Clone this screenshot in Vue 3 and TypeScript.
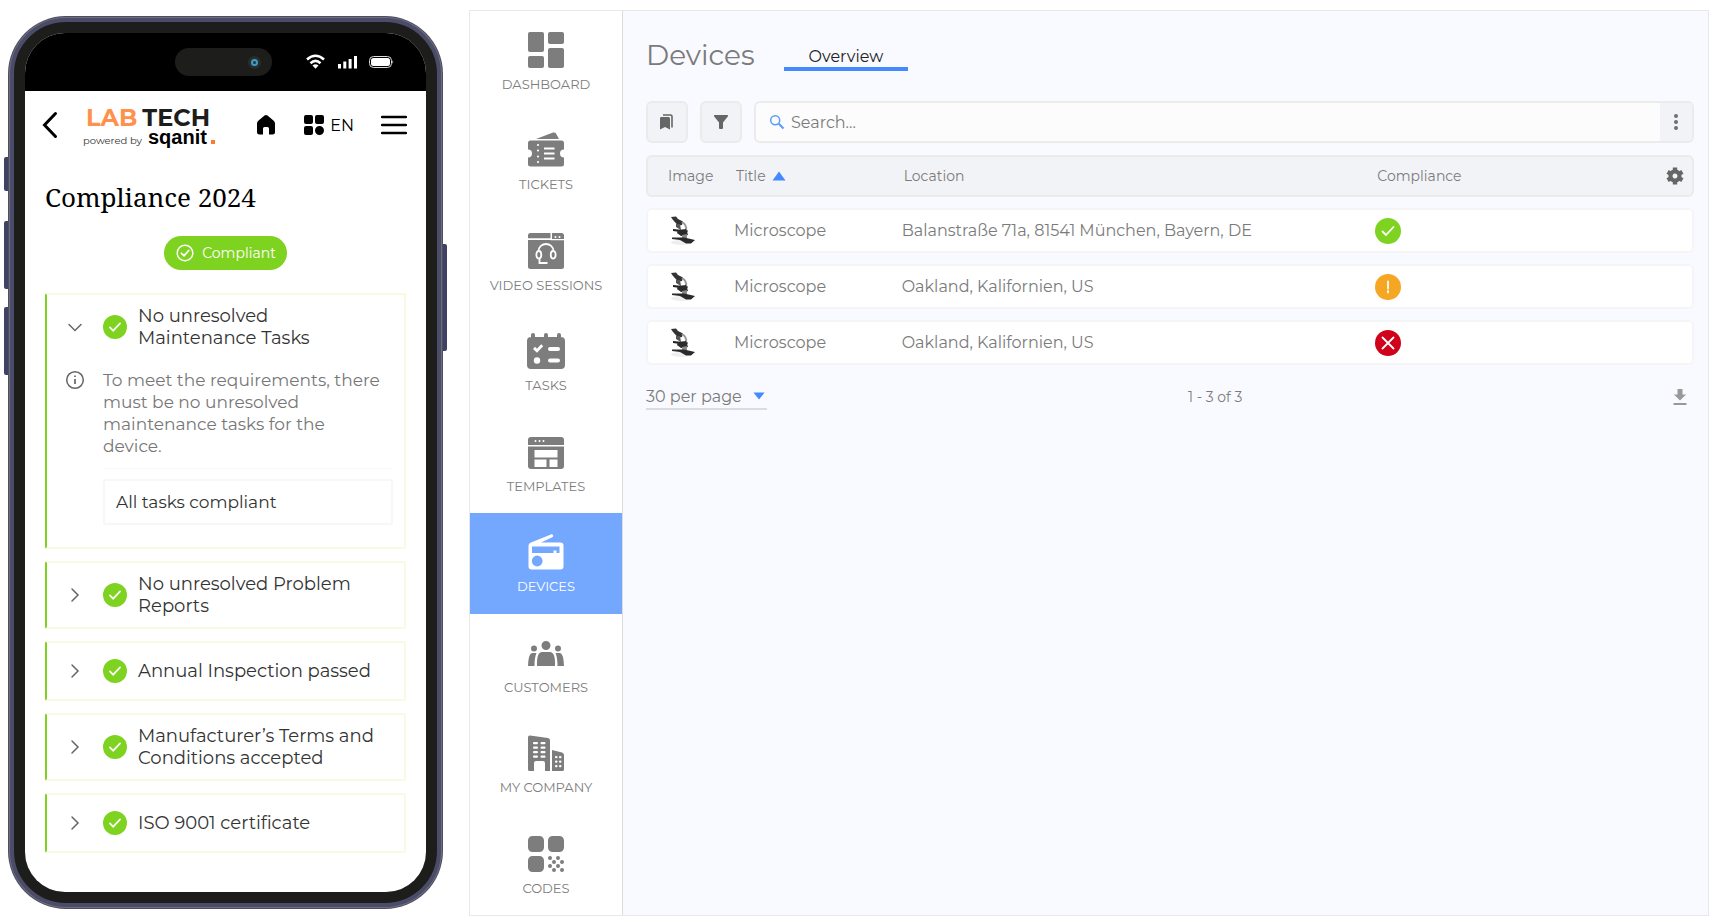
<script setup lang="ts">
import { ref } from 'vue'

interface NavItem {
  label: string
  fill: string
  cutFill?: string
  cutLine?: string
}

interface Check {
  title: string
  info?: string
  result?: string
}

interface Device {
  title: string
  location: string
  state: 'ok' | 'warn' | 'fail'
}

const rr = (x: number, y: number, w: number, h: number, r: number): string =>
  `M${x + r} ${y}h${w - 2 * r}a${r} ${r} 0 0 1 ${r} ${r}v${h - 2 * r}a${r} ${r} 0 0 1 ${-r} ${r}h${-(w - 2 * r)}a${r} ${r} 0 0 1 ${-r} ${-r}v${-(h - 2 * r)}a${r} ${r} 0 0 1 ${r} ${-r}z`

const dots = (list: number[][], r: number): string =>
  list.map(([x, y]) => rr(x - r, y - r, 2 * r, 2 * r, r)).join('')

const nav: NavItem[] = [
  {
    label: 'DASHBOARD',
    fill: rr(0, 0, 16, 20, 2) + rr(20, 0, 16, 12, 2) + rr(0, 24, 16, 12, 2) + rr(20, 16, 16, 20, 2),
  },
  {
    label: 'TICKETS',
    fill: 'M8 7L25 .6Q27 0 28 1.600L31 7zM2.500 8.500H33.500Q36 8.500 36 11V17.500A4 4 0 0 0 36 25.500V32Q36 34.500 33.500 34.500H2.500Q0 34.500 0 32V25.500A4 4 0 0 0 0 17.500V11Q0 8.500 2.500 8.500z',
    cutFill: dots([[10, 13], [10, 18.5], [10, 24.5], [10, 30]], 1.1),
    cutLine: 'M16 16.500H26.500M16 21.500H26.500M16 26.500H26.500',
  },
  {
    label: 'VIDEO SESSIONS',
    fill: rr(0, 0, 36, 36, 2.5),
    cutFill: dots([[27.5, 4], [31.5, 4]], 1) + 'M22.500 0h1.500v6h12v1.200H22.500zM0 5.200H22.500V7H0z',
    cutLine: 'M10.500 18.500C10.500 8.500 25.500 8.500 25.500 18.500M11 18C7.500 17.500 7.500 26 11 25.500C14 25.500 14 18 11 18M25 18C28.500 17.500 28.500 26 25 25.500C22 25.500 22 18 25 18M11.500 26V30H19.500',
  },
  {
    label: 'TASKS',
    fill: rr(-1, 4, 38, 32, 4) + rr(3, 0, 4, 8, 2) + rr(16, 0, 4, 8, 2) + rr(29, 0, 4, 8, 2),
    cutFill: rr(20, 14, 12, 4, 2) + rr(20, 25.5, 12, 4, 2) + dots([[9, 27.5]], 3.2) + 'M5 16L7 13.800L9 15.800L13.200 11.200L15.200 13.200L9 19.800z',
  },
  {
    label: 'TEMPLATES',
    fill: rr(0, 3, 36, 32, 3),
    cutFill: 'M0 11h36v1.500H0zM6.500 16h23v7.500h-23zM6.500 25.500h12v7.500h-12zM21.500 25.500h8v7.500h-8z' + dots([[7.5, 7], [11.5, 7], [15.5, 7]], 1),
  },
  {
    label: 'DEVICES',
    fill: 'M3 8.500L23.500 .3Q25 0 25.200 2Q25.200 2.800 24.200 3.200L13 8.500H32.500Q35.500 8.500 35.500 11.500V32.500Q35.500 35.500 32.500 35.500H3.500Q.5 35.500 .5 32.500V11.500Q.5 9.500 3 8.500z',
    cutFill: 'M4 12.500H31.500V19H28.500V16.500H25.500V19H4z' + dots([[9.2, 27]], 5.4),
  },
  {
    label: 'CUSTOMERS',
    fill: dots([[18, 10.5]], 4.5) + dots([[6, 13.5], [30, 13.5]], 3)
      + 'M9 31Q8.500 17 14 17H22Q27.500 17 27 31zM0 31Q.5 18.500 4 18H8.500Q6.500 22 6.500 31zM36 31Q35.500 18.500 32 18H27.500Q29.500 22 29.500 31z',
  },
  {
    label: 'MY COMPANY',
    fill: 'M2 .5L20 3Q22 3.300 22 5.500V36H17V28Q17 26 15 26H8Q6 26 6 28V36H1.500Q0 36 0 34.500V2.500Q0 .3 2 .5zM24 15L34 17.500Q36 18 36 20V34.500Q36 36 34.500 36H24z',
    cutFill: [7, 11.5, 16, 20.5].map((y) => rr(5, y, 5, 2.2, 1) + rr(12.5, y, 5, 2.2, 1)).join('')
      + [21, 25.5, 30].map((y) => rr(27, y, 2.5, 2.2, 1) + rr(31, y, 2.5, 2.2, 1)).join(''),
  },
  {
    label: 'CODES',
    fill: rr(0, 0, 16, 16, 4.5) + rr(20, 0, 16, 16, 4.5) + rr(0, 20, 16, 16, 4.5)
      + dots([[22, 22], [30, 22], [26, 26], [34, 26], [22, 30], [30, 30], [26, 34], [34, 34]], 2),
  },
]

const current = ref('DEVICES')

const checks: Check[] = [
  {
    title: 'No unresolved Maintenance Tasks',
    info: 'To meet the requirements, there must be no unresolved maintenance tasks for the device.',
    result: 'All tasks compliant',
  },
  { title: 'No unresolved Problem Reports' },
  { title: 'Annual Inspection passed' },
  { title: 'Manufacturer’s Terms and Conditions accepted' },
  { title: 'ISO 9001 certificate' },
]

const open = ref(0)

const devices: Device[] = [
  { title: 'Microscope', location: 'Balanstraße 71a, 81541 München, Bayern, DE', state: 'ok' },
  { title: 'Microscope', location: 'Oakland, Kalifornien, US', state: 'warn' },
  { title: 'Microscope', location: 'Oakland, Kalifornien, US', state: 'fail' },
]

const marks = {
  ok: { color: '#7ed321', path: 'M7.500 13.500L11 17L18.500 9', name: 'Compliant' },
  warn: { color: '#f5a623', path: 'M13 7.500V14.500M13 17V18.500', name: 'Attention' },
  fail: { color: '#d0021b', path: 'M7.500 7.500L18.500 18.500M18.500 7.500L7.500 18.500', name: 'Not compliant' },
}
</script>

<template>
  <div class="page">
    <section class="phone" aria-label="Mobile app">
      <i class="key key-mute"></i>
      <i class="key key-up"></i>
      <i class="key key-down"></i>
      <i class="key key-power"></i>
      <div class="bezel">
        <div class="screen">
          <div class="status">
            <div class="island"><i class="camera"></i></div>
            <svg class="status-icons" viewBox="0 0 88 16" aria-hidden="true">
              <g fill="none" stroke="#fff" stroke-width="2.600">
                <path d="M1 5.500Q9.500 -2 18 5.500" />
                <path d="M4.500 9.200Q9.500 4.500 14.500 9.200" />
              </g>
              <path d="M6.500 11.500Q9.500 9 12.500 11.500L9.500 14.700z" fill="#fff" />
              <path d="M32 10h3v4.500h-3zM37.300 7.500h3v7h-3zM42.600 5h3v9.500h-3zM48 2h3v12.500h-3z" fill="#fff" />
              <rect x="63.500" y="2.500" width="22" height="11" rx="4" fill="none" stroke="#ddd" />
              <rect x="65" y="4" width="19" height="8" rx="2.500" fill="#fff" />
              <path d="M86.500 6q1.500 2 0 4z" fill="#fff" />
            </svg>
          </div>

          <header class="app-bar">
            <button class="plain" aria-label="Back">
              <svg width="18" height="28" viewBox="0 0 18 28"><path d="M14.500 2.500L3.500 14L14.500 25.500" fill="none" stroke="#000" stroke-width="3" stroke-linecap="round" /></svg>
            </button>
            <div class="logo">
              <div class="logo-top"><span class="lab">LAB</span><span>TECH</span></div>
              <div class="logo-sub"><span class="by">powered by</span><b>sqanit</b><i></i></div>
            </div>
            <button class="plain home" aria-label="Home">
              <svg width="20" height="22" viewBox="0 0 20 22"><path d="M10 1Q10.800 1 11.500 1.600L18 7Q19 8 19 9.500V18Q19 20.500 16.500 20.500H13V14.500Q13 13 11.500 13H8.500Q7 13 7 14.500V20.500H3.500Q1 20.500 1 18V9.500Q1 8 2 7L8.500 1.600Q9.200 1 10 1z" /></svg>
            </button>
            <button class="plain lang">
              <svg width="20" height="20" viewBox="0 0 20 20" aria-hidden="true"><path :d="rr(0, 0, 9, 9, 2) + rr(11, 0, 9, 9, 2) + rr(0, 11, 9, 9, 2) + rr(11, 11, 9, 9, 4.5)" /></svg>
              <span>EN</span>
            </button>
            <button class="plain" aria-label="Menu">
              <svg width="26" height="20" viewBox="0 0 26 20"><path d="M1 2H25M1 10H25M1 18H25" stroke="#000" stroke-width="2.500" stroke-linecap="round" /></svg>
            </button>
          </header>

          <div class="app-body">
            <h1>Compliance 2024</h1>
            <div class="pill">
              <svg width="18" height="18" viewBox="0 0 18 18" fill="none" stroke="#fff" stroke-width="1.400" aria-hidden="true"><circle cx="9" cy="9" r="7.800" /><path d="M5.500 9.300L8 11.800L12.700 6.500" stroke-linecap="round" stroke-width="1.800" /></svg>
              Compliant
            </div>
            <article v-for="(c, i) in checks" :key="c.title" class="check">
              <button class="check-head" :aria-expanded="open === i" @click="open = open === i ? -1 : i">
                <svg width="20" height="20" viewBox="0 0 20 20" fill="none" stroke="#666" stroke-width="1.500" stroke-linecap="round" aria-hidden="true">
                  <path :d="open === i ? 'M4 7.500L10 13.500L16 7.500' : 'M7 4L13 10L7 16'" />
                </svg>
                <svg class="tick" width="24" height="24" viewBox="0 0 26 26" fill="none" aria-hidden="true">
                  <circle cx="13" cy="13" r="13" fill="#7ed321" />
                  <path :d="marks.ok.path" stroke="#fff" stroke-width="1.800" stroke-linecap="round" />
                </svg>
                <span>{{ c.title }}</span>
              </button>
              <div v-if="open === i && c.info" class="detail">
                <svg width="20" height="20" viewBox="0 0 20 20" fill="none" stroke="#666" aria-hidden="true"><circle cx="10" cy="10" r="8.300" stroke-width="1.500" /><path d="M10 9V14M10 5.500V7" stroke-width="1.700" /></svg>
                <div class="detail-main">
                  <p>{{ c.info }}</p>
                  <div class="result">{{ c.result }}</div>
                </div>
              </div>
            </article>
          </div>
        </div>
      </div>
    </section>

    <section class="panel" aria-label="Desktop app">
      <nav class="side">
        <a v-for="n in nav" :key="n.label" href="#" :class="{ active: n.label === current }" @click.prevent="current = n.label">
          <svg width="36" height="36" viewBox="0 0 36 36" aria-hidden="true">
            <path :d="n.fill" fill="currentColor" />
            <path v-if="n.cutFill" class="cut-fill" :d="n.cutFill" />
            <path v-if="n.cutLine" class="cut-line" :d="n.cutLine" />
          </svg>
          <span>{{ n.label }}</span>
        </a>
      </nav>

      <main class="main">
        <div class="heading">
          <h2>Devices</h2>
          <a href="#" class="tab" aria-current="page">Overview</a>
        </div>

        <div class="tools">
          <button class="square" aria-label="Saved views">
            <svg width="16" height="18" viewBox="0 0 16 18" fill="#666"><path d="M2 4H9.500Q11 4 11 5.500V16.500L6 14L1 16.500V5.500Q1 4 2 4z" /><path d="M4 2H11.500Q13 2 13 3.500V14.500" fill="none" stroke="#666" stroke-width="1.600" /></svg>
          </button>
          <button class="square" aria-label="Filter">
            <svg width="16" height="18" viewBox="0 0 16 18" fill="#666"><path d="M1.500 2H14.500Q15.500 2.300 15 3.300L10 9.500V15Q10 16 9 16H7Q6 16 6 15V9.500L1 3.300Q.5 2.300 1.500 2z" /></svg>
          </button>
          <div class="search">
            <svg width="16" height="16" viewBox="0 0 16 16" fill="none" stroke="#5b9aff" aria-hidden="true"><circle cx="6.200" cy="6.200" r="4.500" stroke-width="1.500" /><path d="M9.800 9.800L14.500 14.500" stroke-width="2" /></svg>
            <input type="text" placeholder="Search..." aria-label="Search" />
            <button aria-label="More options">
              <svg width="6" height="18" viewBox="0 0 6 18" fill="#6f6f6f"><circle cx="3" cy="3" r="2" /><circle cx="3" cy="9" r="2" /><circle cx="3" cy="15" r="2" /></svg>
            </button>
          </div>
        </div>

        <table>
          <colgroup><col class="c-image" /><col class="c-title" /><col class="c-location" /><col /><col class="c-set" /></colgroup>
          <thead>
            <tr>
              <th>Image</th>
              <th>Title <svg class="sort" width="14" height="10" viewBox="0 0 14 10" aria-hidden="true"><path d="M7 .5L13.500 9.500H.5z" fill="#4589ff" /></svg></th>
              <th>Location</th>
              <th>Compliance</th>
              <th class="set">
                <button class="plain" aria-label="Column settings">
                  <svg width="18" height="18" viewBox="0 0 18 18"><path fill="none" stroke="#666" stroke-width="4" d="M9 4.500A4.500 4.500 0 1 1 8.990 4.500z" /><path stroke="#666" stroke-width="4.400" d="M9 .5V3.500M9 14.500V17.500M1.600 4.800L4.200 6.300M13.800 11.700L16.400 13.200M1.600 13.200L4.200 11.700M13.800 6.300L16.400 4.800" /></svg>
                </button>
              </th>
            </tr>
          </thead>
          <tbody>
            <tr v-for="(d, i) in devices" :key="i">
              <td>
                <svg class="scope" width="26" height="30" viewBox="0 0 26 30" role="img" aria-label="Microscope">
                  <ellipse cx="11" cy="26.500" rx="10" ry="2.500" fill="#eee" />
                  <path d="M1 1L6 .5L8 3L13 5.500L12 9L8 9.500L3 4z" fill="#333" />
                  <path d="M12 6Q17 9 16 14" fill="none" stroke="#999" stroke-width="2" />
                  <path d="M6 8L10 8L11 14L6 11z" fill="#555" />
                  <path d="M3 13L18 14.500L17 17L3 15z" fill="#222" />
                  <path d="M8 14L16 13L18 19L11 20L7 17z" fill="#2b2b2b" />
                  <path d="M12 19L17 18L17 23L12 23z" fill="#888" />
                  <path d="M2 21.500L14 21.500L25 24L21 27.500L16 27.500L10 24L2 23z" fill="#2a2a2a" />
                </svg>
              </td>
              <td>{{ d.title }}</td>
              <td>{{ d.location }}</td>
              <td>
                <svg class="mark" width="26" height="26" viewBox="0 0 26 26" fill="none" role="img" :aria-label="marks[d.state].name">
                  <circle cx="13" cy="13" r="13" :fill="marks[d.state].color" />
                  <path :d="marks[d.state].path" stroke="#fff" stroke-width="1.800" stroke-linecap="round" />
                </svg>
              </td>
              <td></td>
            </tr>
          </tbody>
        </table>

        <footer class="foot">
          <div class="per-page">
            <select aria-label="Rows per page"><option>30 per page</option><option>50 per page</option></select>
            <svg width="12" height="8" viewBox="0 0 12 8" aria-hidden="true"><path d="M.5 .5H11.500L6 7.500z" fill="#4589ff" /></svg>
          </div>
          <span>1 - 3 of 3</span>
          <button class="plain download" aria-label="Download">
            <svg width="14" height="18" viewBox="0 0 14 18" fill="#999"><path d="M4.500 1H9.500V6.500H13L7 12.500L1 6.500H4.500zM.5 15H13.500V17H.5z" /></svg>
          </button>
        </footer>
      </main>
    </section>
  </div>
</template>

<style>
body {
  margin: 0;
  background: #fff;
}
</style>

<style scoped>
* {
  box-sizing: border-box;
}

.page {
  display: flex;
  gap: 26px;
  min-height: 100vh;
  padding: 10px 7px 8px 8px;
  font-family: Montserrat, Inter, "Noto Sans", sans-serif;
  font-size: 16px;
  color: #333;
}

button,
input,
select {
  font: inherit;
  color: inherit;
}

svg {
  flex: none;
  display: block;
}

.plain {
  display: flex;
  align-items: center;
  padding: 0;
  border: 0;
  background: none;
}

/* phone */
.phone {
  position: relative;
  flex: none;
  width: 435px;
  margin: 6px 0 7px;
  padding: 2px;
  border-radius: 58px;
  background: #4a4c69;
}

.bezel {
  height: 100%;
  padding: 11px;
  border: 4px solid #4a4c69;
  border-radius: 56px;
  background: #1d1d1b;
  box-shadow: 0 0 0 1px #706f72;
}

.key {
  position: absolute;
  left: -4px;
  width: 4px;
  height: 68px;
  border-radius: 2px 0 0 2px;
  background: #3f4265;
}

.key-mute {
  top: 141px;
  height: 34px;
}

.key-up {
  top: 205px;
}

.key-down {
  top: 291px;
}

.key-power {
  top: 228px;
  right: -4px;
  left: auto;
  height: 107px;
  border-radius: 0 2px 2px 0;
}

.screen {
  height: 100%;
  overflow: hidden;
  border-radius: 40px;
  background: #fff;
}

.status {
  display: flex;
  align-items: center;
  height: 58px;
  padding: 0 32px 0 150px;
  background: #000;
}

.island {
  display: flex;
  align-items: center;
  justify-content: flex-end;
  width: 97px;
  height: 28px;
  padding-right: 14px;
  border-radius: 14px;
  background: #1d1d1b;
}

.camera {
  width: 7px;
  height: 7px;
  border: 2px solid #3aa0c0;
  border-radius: 50%;
  background: #123a4c;
  box-shadow: 0 0 0 3px #2a2c2e;
}

.status-icons {
  width: 88px;
  height: 16px;
  margin-left: auto;
}

.app-bar {
  display: flex;
  align-items: center;
  height: 68px;
  padding: 0 19px 0 16px;
  color: #000;
}

.logo {
  padding-top: 7px;
  margin-left: 24px;
}

.logo-top {
  display: flex;
  gap: 5px;
  padding-left: 3px;
  font-size: 24px;
  font-weight: 700;
  line-height: 20px;
  color: #1d1d1b;
}

.lab {
  color: #ff914d;
}

.logo-sub {
  display: flex;
  align-items: baseline;
  font-size: 10px;
  line-height: 18px;
  color: #333;
}

.logo-sub b {
  margin-left: 6px;
  font: bold 20px/18px "Liberation Sans", Arial, sans-serif;
  color: #000;
}

.logo-sub i {
  width: 4px;
  height: 4px;
  margin-left: 4px;
  background: #ff7a2f;
}

.home {
  margin-left: auto;
}

.lang {
  gap: 6px;
  margin: 0 27px 0 28px;
}

.app-body {
  display: flex;
  flex-direction: column;
  gap: 12px;
  padding: 20px 20px 32px;
}

h1 {
  margin: 0;
  font: 400 26px/36px "Noto Serif", "DejaVu Serif Condensed", "DejaVu Serif", serif;
  color: #000;
}

.pill {
  display: flex;
  align-items: center;
  align-self: center;
  gap: 8px;
  height: 34px;
  margin: 9px 0 11px;
  padding: 0 11px 0 12px;
  border-radius: 17px;
  background: #7ed321;
  font-size: 14px;
  color: #fff;
}

.check {
  padding: 10px 11px 10px 16px;
  border: 2px solid #f7fbe3;
  border-left-color: #7ed321;
  border-radius: 2px;
}

.check-head {
  display: flex;
  align-items: center;
  width: 100%;
  min-height: 36px;
  padding: 0 8px 0 0;
  border: 0;
  background: none;
  font-size: 18px;
  line-height: 22px;
  text-align: left;
}

.tick {
  margin: 0 11px 0 18px;
}

.check-head svg:first-child,
.detail > svg {
  margin-left: 2px;
}

.detail {
  display: flex;
  align-items: flex-start;
  gap: 18px;
  margin: 20px 0 12px;
}

.detail > svg {
  margin-top: 1px;
}

.detail-main {
  flex: 1;
}

.detail p {
  margin: 0 0 10px;
  padding: 0 8px 11px 0;
  border-bottom: 1px solid #f7f7f7;
  font-size: 17px;
  line-height: 22px;
  color: #777;
}

.result {
  padding: 10px 11px;
  border: 2px solid #f7f7f7;
  border-radius: 2px;
  font-size: 17px;
  line-height: 22px;
}

/* desktop panel */
.panel {
  display: flex;
  flex: 1;
  min-width: 0;
  border: 1px solid #e8e8ea;
  background: #f9faff;
}

.side {
  display: flex;
  flex: none;
  flex-direction: column;
  width: 153px;
  border-right: 1px solid #dcdcde;
  background: #fff;
}

.side a {
  --ground: #fff;
  display: flex;
  flex: 1;
  flex-direction: column;
  align-items: center;
  gap: 8px;
  min-height: 96px;
  padding-top: 21px;
  font-size: 13px;
  line-height: 16px;
  color: #7d7d7d;
  text-decoration: none;
  white-space: nowrap;
}

.side a.active {
  --ground: #74a8ff;
  background: #74a8ff;
  color: #fff;
}

.side svg {
  overflow: visible;
}

.cut-fill {
  fill: var(--ground);
}

.cut-line {
  fill: none;
  stroke: var(--ground);
  stroke-width: 1.8;
}

.main {
  flex: 1;
  min-width: 0;
  padding: 26px 14px 20px 23px;
  color: #7b7b7b;
}

.heading {
  display: flex;
  gap: 29px;
  height: 34px;
}

h2 {
  margin: 0;
  font-size: 28px;
  font-weight: 400;
  line-height: 36px;
}

.tab {
  height: 34px;
  padding: 9px 25px 0;
  border-bottom: 4px solid #4589ff;
  font-size: 16px;
  line-height: 22px;
  color: #222;
  text-decoration: none;
}

.tools {
  display: flex;
  gap: 12px;
  margin: 30px 0 12px;
}

.square {
  display: flex;
  align-items: center;
  justify-content: center;
  width: 42px;
  height: 42px;
  padding: 0;
  border: 2px solid #ebebeb;
  border-radius: 6px;
  background: #f2f3f7;
}

.search {
  display: flex;
  flex: 1;
  align-items: center;
  height: 42px;
  padding-left: 13px;
  overflow: hidden;
  border: 2px solid #ebebeb;
  border-radius: 6px;
  background: #fcfcfc;
}

.search input {
  flex: 1;
  min-width: 0;
  padding: 0 6px;
  border: 0;
  outline: 0;
  background: none;
}

.search input::placeholder {
  color: #7b7b7b;
  opacity: 1;
}

.search button {
  display: flex;
  align-items: center;
  justify-content: center;
  width: 32px;
  height: 100%;
  padding: 0;
  border: 0;
  background: #f2f3f7;
}

table {
  width: 100%;
  margin-top: -11px;
  table-layout: fixed;
  border-spacing: 0 11px;
}

.c-image {
  width: 84px;
}

.c-title {
  width: 16%;
}

.c-location {
  width: 45.2%;
}

.c-set {
  width: 48px;
}

th {
  height: 42px;
  padding: 0 0 0 6px;
  border: solid #ebebeb;
  border-width: 2px 0;
  background: #f2f3f7;
  font-size: 14px;
  font-weight: 400;
  text-align: left;
}

th .sort {
  display: inline-block;
  margin-left: 3px;
}

td {
  height: 45px;
  padding: 0 0 0 4px;
  border: solid #f5f5f7;
  border-width: 2px 0;
  background: #fff;
  font-size: 16px;
}

th:first-child,
td:first-child {
  padding-left: 20px;
  border-left-width: 2px;
  border-radius: 6px 0 0 6px;
}

th:last-child,
td:last-child {
  border-right-width: 2px;
  border-radius: 0 6px 6px 0;
}

.set button {
  margin-left: 14px;
}

.scope {
  margin-left: 2px;
}

.foot {
  display: grid;
  grid-template-columns: 6fr auto 5fr;
  align-items: center;
  margin-top: 8px;
  font-size: 14px;
}

.per-page {
  display: flex;
  align-items: center;
  justify-self: start;
  border-bottom: 2px solid #dcdcdf;
}

.per-page svg {
  margin: 0 2px 0 -14px;
  pointer-events: none;
}

.per-page select {
  height: 24px;
  padding: 0 25px 0 0;
  border: 0;
  outline: 0;
  appearance: none;
  background: none;
  font-size: 16px;
}

.download {
  justify-self: end;
  margin-right: 7px;
}
</style>
